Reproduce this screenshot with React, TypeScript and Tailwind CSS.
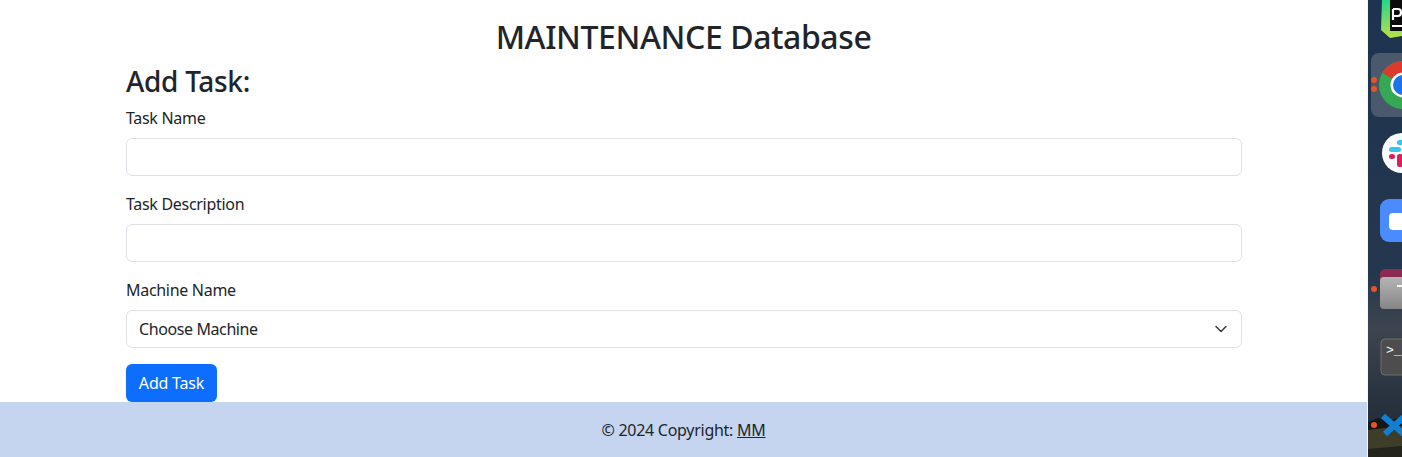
const font = "font-['Noto_Sans','Open_Sans',sans-serif]";

function Field({ label, children }: { label: string; children: React.ReactNode }) {
  return (
    <div className="mb-4">
      <label className="mb-2 block text-base leading-6 tracking-[-0.3px] text-[#212529]">{label}</label>
      {children}
    </div>
  );
}

function Dock() {
  return (
    <svg className="h-[457px] w-[34px] shrink-0" viewBox="0 0 34 457">
      <defs>
        <linearGradient id="wall" x1="0" y1="0" x2="0" y2="1">
          <stop offset="0" stopColor="#1c3450" />
          <stop offset="0.6" stopColor="#24374d" />
          <stop offset="0.72" stopColor="#3d454e" />
          <stop offset="0.86" stopColor="#2a3440" />
          <stop offset="1" stopColor="#1b2a33" />
        </linearGradient>
        <linearGradient id="drawer" x1="0" y1="0" x2="0" y2="1">
          <stop offset="0" stopColor="#b5b5b5" />
          <stop offset="1" stopColor="#868686" />
        </linearGradient>
        <linearGradient id="pycharm" x1="0" y1="0" x2="0" y2="1">
          <stop offset="0" stopColor="#21d789" />
          <stop offset="1" stopColor="#b9e04a" />
        </linearGradient>
      </defs>
      <rect width="34" height="457" fill="url(#wall)" />
      <path d="M0 422 L10 418 L20 421 L34 417 V457 H0 Z" fill="#15181a" />
      <path d="M0 430 L34 426 V457 H0 Z" fill="#3d3d2a" />
      <path d="M0 449 L34 446 V457 H0 Z" fill="#24241c" />

      <path d="M14 0 H34 V36 L22 38 L13 30 Z" fill="url(#pycharm)" />
      <rect x="22" y="0" width="12" height="31" fill="#0b0b0b" />
      <path d="M25 9 V20 M25 9 H30 Q33 9 33 12.5 Q33 16 30 16 H25" fill="none" stroke="#fff" strokeWidth="2.2" />
      <rect x="24" y="25" width="10" height="2" fill="#fff" />

      <rect x="3" y="53" width="40" height="64" rx="8" fill="#4a5a6c" />
      <circle cx="6" cy="80" r="3" fill="#e95420" />
      <circle cx="6" cy="89" r="3" fill="#e95420" />
      <circle cx="35" cy="85" r="24" fill="#34a853" />
      <path d="M35 85 L14.5 73 A24 24 0 0 1 35 61 H40 V73 H35 Z" fill="#db3a2c" />
      <circle cx="35" cy="85" r="12.5" fill="#fff" />
      <circle cx="35" cy="85" r="10" fill="#1a73e8" />

      <circle cx="34" cy="153" r="20" fill="#fff" />
      <rect x="21" y="147" width="12" height="5" rx="2.5" fill="#36c5f0" />
      <rect x="29" y="140" width="7" height="5" rx="2.5" fill="#36c5f0" />
      <rect x="21" y="154" width="6" height="5" rx="2.5" fill="#e01e5a" />
      <rect x="29" y="154" width="6" height="13" rx="2.5" fill="#e01e5a" />

      <rect x="12" y="199" width="40" height="43" rx="9" fill="#4a8cff" />
      <rect x="21" y="213" width="20" height="17" rx="4" fill="#fff" />

      <rect x="12" y="269" width="30" height="22" rx="5" fill="#8c2b52" />
      <rect x="12" y="277" width="30" height="32" rx="4" fill="url(#drawer)" />
      <rect x="29" y="285" width="10" height="2" fill="#f4f4f4" />
      <circle cx="6" cy="289" r="3" fill="#e95420" />

      <rect x="13" y="339" width="30" height="36" rx="4" fill="#4d4d4d" stroke="#6f6f6f" />
      <text x="18" y="354" fill="#fff" fontSize="13" fontFamily="Liberation Mono, monospace">&gt;_</text>

      <path d="M15 416 L38 436 M17 434 L38 415" stroke="#0f80d4" strokeWidth="6" />
      <circle cx="6" cy="425" r="3" fill="#e95420" />
    </svg>
  );
}

export default function App() {
  return (
    <div className={`flex h-[457px] w-[1402px] overflow-hidden bg-white ${font}`}>
      <div className="flex w-[1367px] shrink-0 flex-col">
        <div className="flex-1 px-[126px]">
          <h1 className="mt-[18px] mb-2 text-center text-[32px] leading-[38px] font-medium tracking-[-0.4px] text-[#212529]">
            MAINTENANCE Database
          </h1>
          <div className="w-[1116px]">
            <h3 className="mb-2 text-[28px] leading-[34px] font-medium tracking-[-0.3px] text-[#212529]">Add Task:</h3>
            <Field label="Task Name">
              <input className="block h-[38px] w-full rounded-md border border-[#dee2e6] bg-white px-3" />
            </Field>
            <Field label="Task Description">
              <input className="block h-[38px] w-full rounded-md border border-[#dee2e6] bg-white px-3" />
            </Field>
            <Field label="Machine Name">
              <div className="flex h-[38px] w-full items-center justify-between rounded-md border border-[#dee2e6] bg-white pr-3 pl-3 text-base tracking-[-0.4px] text-[#212529]">
                <span>Choose Machine</span>
                <svg className="h-4 w-4" viewBox="0 0 16 16" fill="none">
                  <path d="m3 5.5 5 5 5-5" stroke="#343a40" strokeWidth="1.5" strokeLinecap="round" strokeLinejoin="round" />
                </svg>
              </div>
            </Field>
            <button className="h-[38px] w-[91px] rounded-md bg-[#0d6efd] text-base tracking-[-0.2px] text-white">Add Task</button>
          </div>
        </div>
        <footer className="flex h-[55px] shrink-0 items-center justify-center bg-[#c5d5f0] text-base tracking-[-0.27px] text-[#212529]">
          <span>
            © 2024 Copyright: <a className="underline">MM</a>
          </span>
        </footer>
      </div>
      <div className="w-px shrink-0 bg-[#f5f5f5]" />
      <Dock />
    </div>
  );
}
